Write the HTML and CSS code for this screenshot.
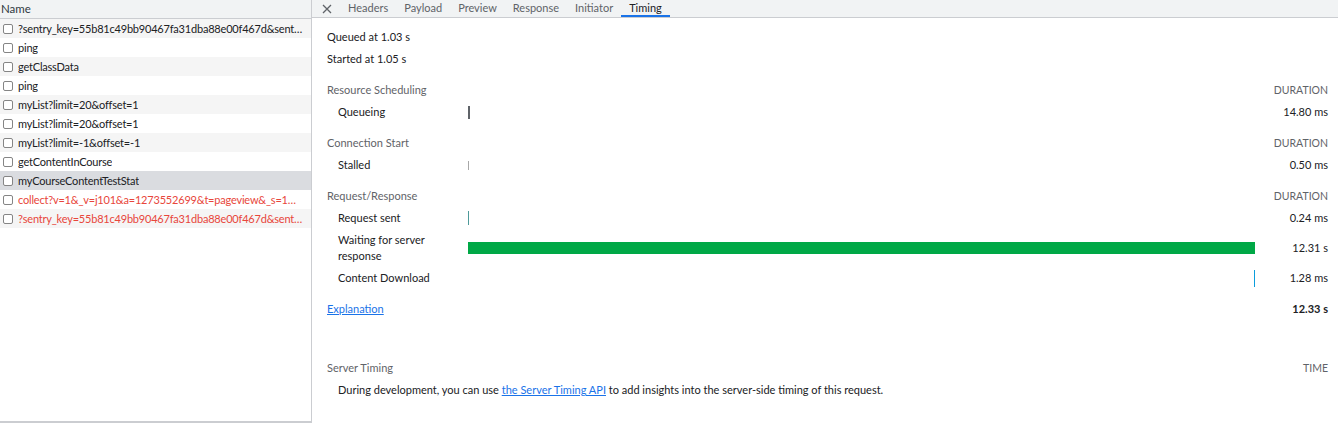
FILE: index.html
```html
<!DOCTYPE html>
<html lang="en">
<head>
  <meta charset="UTF-8" />
  <title>Network - Timing</title>
  <link rel="stylesheet" href="styles.css">
</head>
<body>
  <div class="devtools">
    <div class="requests">
      <div class="requests-head">Name</div>
      <ul class="request-list">
        <li class="request-row"><span class="cb"></span><span class="request-name">?sentry_key=55b81c49bb90467fa31dba88e00f467d&amp;sentry_version=7</span></li>
        <li class="request-row"><span class="cb"></span><span class="request-name">ping</span></li>
        <li class="request-row"><span class="cb"></span><span class="request-name">getClassData</span></li>
        <li class="request-row"><span class="cb"></span><span class="request-name">ping</span></li>
        <li class="request-row"><span class="cb"></span><span class="request-name">myList?limit=20&amp;offset=1</span></li>
        <li class="request-row"><span class="cb"></span><span class="request-name">myList?limit=20&amp;offset=1</span></li>
        <li class="request-row"><span class="cb"></span><span class="request-name">myList?limit=-1&amp;offset=-1</span></li>
        <li class="request-row"><span class="cb"></span><span class="request-name">getContentInCourse</span></li>
        <li class="request-row selected"><span class="cb"></span><span class="request-name">myCourseContentTestStat</span></li>
        <li class="request-row failed"><span class="cb"></span><span class="request-name">collect?v=1&amp;_v=j101&amp;a=1273552699&amp;t=pageview&amp;_s=1&amp;dl=https</span></li>
        <li class="request-row failed"><span class="cb"></span><span class="request-name">?sentry_key=55b81c49bb90467fa31dba88e00f467d&amp;sentry_version=7</span></li>
      </ul>
    </div>

    <div class="details">
      <div class="tabbar">
        <span class="close-btn">
          <svg width="10" height="10" viewBox="0 0 10 10"><path d="M1 1L9 9M9 1L1 9" stroke="#5f6368" stroke-width="1.3" fill="none"/></svg>
        </span>
        <span class="tab">Headers</span>
        <span class="tab">Payload</span>
        <span class="tab">Preview</span>
        <span class="tab">Response</span>
        <span class="tab">Initiator</span>
        <span class="tab active">Timing</span>
      </div>

      <div class="timing">
        <div class="timing-line">Queued at 1.03 s</div>
        <div class="timing-line">Started at 1.05 s</div>

        <div class="timing-table">
          <div class="group-title">Resource Scheduling</div>
          <div class="group-col">DURATION</div>
          <div class="phase-label">Queueing</div>
          <div class="phase-bar"><span class="bar queueing" style="margin-left:0%"></span></div>
          <div class="phase-time">14.80 ms</div>

          <div class="group-title spaced">Connection Start</div>
          <div class="group-col spaced">DURATION</div>
          <div class="phase-label">Stalled</div>
          <div class="phase-bar"><span class="bar stalled" style="margin-left:0%"></span></div>
          <div class="phase-time">0.50 ms</div>

          <div class="group-title spaced">Request/Response</div>
          <div class="group-col spaced">DURATION</div>
          <div class="phase-label">Request sent</div>
          <div class="phase-bar"><span class="bar sending" style="margin-left:0%"></span></div>
          <div class="phase-time">0.24 ms</div>
          <div class="phase-label tall">Waiting for server response</div>
          <div class="phase-bar tall"><span class="bar waiting" style="margin-left:0%;width:99.9%"></span></div>
          <div class="phase-time tall">12.31 s</div>
          <div class="phase-label">Content Download</div>
          <div class="phase-bar"><span class="bar receiving" style="margin-left:99.8%"></span></div>
          <div class="phase-time">1.28 ms</div>

          <div class="group-title spaced"><a href="#" class="link">Explanation</a></div>
          <div class="group-col spaced total">12.33 s</div>
        </div>

        <div class="server-timing">
          <div class="server-head">
            <span>Server Timing</span>
            <span class="group-col-text">TIME</span>
          </div>
          <div class="server-note">During development, you can use <a href="#" class="link">the Server Timing API</a> to add insights into the server-side timing of this request.</div>
        </div>
      </div>
    </div>
  </div>
</body>
</html>
```

FILE: styles.css
```css
* {
  box-sizing: border-box;
}
body {
  margin: 0;
  font-family: Lato, "Open Sans", sans-serif;
  font-size: 11px;
  color: #202124;
  background: white;
}
.devtools {
  display: flex;
  height: 423px;
  overflow: hidden;
}

/* request list */
.requests {
  width: 312px;
  flex: none;
  border-right: 1px solid #cbcdd1;
  border-bottom: 2px solid #cbcdd1;
  overflow: hidden;
}
.requests-head {
  height: 19px;
  line-height: 17px;
  padding-left: 1px;
  background: #f1f3f4;
  border-bottom: 1px solid #cbcdd1;
  color: #303942;
  font-size: 11.5px;
}
.request-list {
  list-style: none;
  margin: 0;
  padding: 0;
}
.request-row {
  display: flex;
  align-items: center;
  height: 19px;
  padding-left: 3px;
  padding-right: 8px;
}
.request-row:nth-child(odd) {
  background: #f5f5f5;
}
.request-row.selected {
  background: #dadce0;
}
.request-row.failed {
  color: #e8463b;
}
.cb {
  width: 10px;
  height: 10px;
  flex: none;
  border: 1px solid #858585;
  border-radius: 2px;
  background: white;
  margin-right: 5px;
}
.request-name {
  white-space: nowrap;
  overflow: hidden;
  text-overflow: ellipsis;
  font-size: 11px;
  letter-spacing: -0.2px;
}

/* details */
.details {
  flex: 1;
  min-width: 0;
}
.tabbar {
  display: flex;
  height: 18px;
  background: #f1f3f4;
  border-bottom: 1px solid #cbcdd1;
}
.close-btn {
  width: 28px;
  display: flex;
  align-items: center;
  justify-content: center;
  padding-left: 2px;
}
.tab {
  padding: 0 8px;
  line-height: 16px;
  color: #5f6368;
  border-bottom: 2px solid transparent;
}
.tab.active {
  color: #202124;
  border-bottom-color: #1a73e8;
}

.timing {
  padding: 8px 10px 0 15px;
}
.timing-line {
  height: 22px;
  line-height: 22px;
}
.timing-table {
  display: grid;
  grid-template-columns: 141px 1fr 72px;
  margin-top: 9px;
}
.group-title {
  grid-column: 1 / 3;
  height: 22px;
  line-height: 22px;
  color: #5f6368;
}
.group-col {
  height: 22px;
  line-height: 22px;
  text-align: right;
  color: #5f6368;
  font-size: 10.5px;
}
.spaced {
  margin-top: 9px;
}
.group-col.total {
  color: #202124;
  font-weight: bold;
  font-size: 11px;
}
.phase-label {
  height: 22px;
  padding-left: 11px;
  line-height: 22px;
}
.phase-label.tall {
  height: 38px;
  line-height: 16px;
  padding-top: 3px;
  padding-right: 20px;
}
.phase-bar {
  height: 22px;
  display: flex;
  align-items: center;
}
.phase-bar.tall {
  height: 38px;
}
.phase-time {
  height: 22px;
  line-height: 22px;
  text-align: right;
}
.phase-time.tall {
  height: 38px;
  line-height: 38px;
}
.bar {
  display: block;
  width: 1px;
  flex: none;
}
.bar.queueing {
  width: 2px;
  height: 13px;
  background: #5f6368;
}
.bar.stalled {
  height: 9px;
  background: #a8a8a8;
}
.bar.sending {
  height: 14px;
  background: #4e9a9a;
}
.bar.waiting {
  height: 12px;
  background: #00a846;
}
.bar.receiving {
  height: 17px;
  background: #0b9ddc;
}
.link {
  color: #1a73e8;
  text-decoration: underline;
}

.server-timing {
  margin-top: 37px;
}
.server-head {
  display: flex;
  justify-content: space-between;
  height: 22px;
  line-height: 22px;
  color: #5f6368;
}
.group-col-text {
  font-size: 10.5px;
}
.server-note {
  height: 22px;
  line-height: 22px;
  padding-left: 11px;
}
```
